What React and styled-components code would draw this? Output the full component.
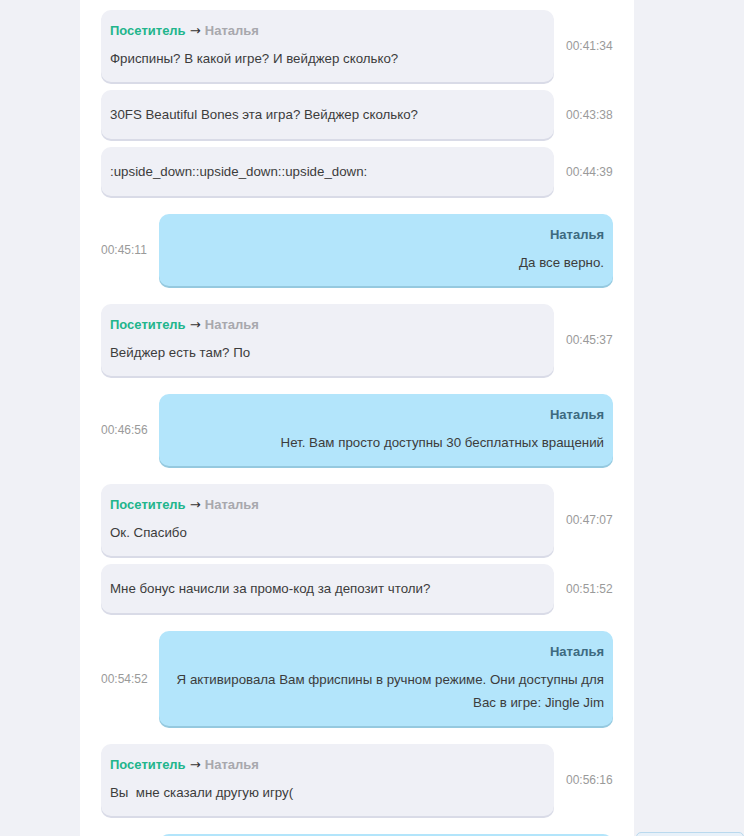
import styled, { createGlobalStyle } from "styled-components"

const GlobalStyle = createGlobalStyle`
	html, body {
		margin: 0;
		padding: 0;
		background: #f0f1f6;
		font-family: "Liberation Sans", Arial, sans-serif;
		overflow: hidden;
	}
`

const messages = [
	{ from: "visitor", header: true, time: "00:41:34", text: ["Фриспины? В какой игре? И вейджер сколько?"] },
	{ from: "visitor", time: "00:43:38", text: ["30FS Beautiful Bones эта игра? Вейджер сколько?"] },
	{ from: "visitor", time: "00:44:39", text: [":upside_down::upside_down::upside_down:"] },
	{ from: "agent", header: true, time: "00:45:11", text: ["Да все верно."] },
	{ from: "visitor", header: true, time: "00:45:37", text: ["Вейджер есть там? По"] },
	{ from: "agent", header: true, time: "00:46:56", text: ["Нет. Вам просто доступны 30 бесплатных вращений"] },
	{ from: "visitor", header: true, time: "00:47:07", text: ["Ок. Спасибо"] },
	{ from: "visitor", time: "00:51:52", text: ["Мне бонус начисли за промо-код за депозит чтоли?"] },
	{
		from: "agent",
		header: true,
		time: "00:54:52",
		text: ["Я активировала Вам фриспины в ручном режиме. Они доступны для", "Вас в игре: Jingle Jim"],
	},
	{ from: "visitor", header: true, time: "00:56:16", text: ["Вы  мне сказали другую игру("] },
	{ from: "agent", header: true, time: "00:57:02", text: ["Хорошо, сейчас проверю."] },
]

export default function App() {
	return (
		<>
			<GlobalStyle />
			<Page>
				<LeftGutter />
				<ChatPanel>
					{messages.map((msg, i) => {
						const prev = messages[i - 1]
						const sameSender = prev && prev.from === msg.from
						const agent = msg.from === "agent"
						return (
							<Row key={i} $agent={agent} $tight={sameSender} $first={i === 0}>
								<Bubble $agent={agent} $plain={!msg.header}>
									{msg.header &&
										(agent ? (
											<AgentName>Наталья</AgentName>
										) : (
											<Header>
												<Visitor>Посетитель</Visitor>
												<Arrow> → </Arrow>
												<Target>Наталья</Target>
											</Header>
										))}
									<Body>
										{msg.text.map((line, j) => (
											<Line key={j}>{line}</Line>
										))}
									</Body>
								</Bubble>
								<Time>{msg.time}</Time>
							</Row>
						)
					})}
				</ChatPanel>
				<SideColumn>
					<SideCard />
				</SideColumn>
			</Page>
		</>
	)
}

const Page = styled.div`
	display: flex;
	width: 744px;
	height: 836px;
	overflow: hidden;
`

const LeftGutter = styled.div`
	width: 80px;
	flex-shrink: 0;
`

const ChatPanel = styled.section`
	width: 554px;
	flex-shrink: 0;
	background: #ffffff;
	padding-top: 10px;
	box-sizing: border-box;
`

const Row = styled.div`
	display: flex;
	flex-direction: ${(p) => (p.$agent ? "row-reverse" : "row")};
	align-items: center;
	gap: 12px;
	padding: ${(p) => (p.$agent ? "0 21px" : "0 22px 0 21px")};
	margin-top: ${(p) => (p.$first ? "0" : p.$tight ? "8px" : "18px")};
`

const Bubble = styled.div`
	flex: 1;
	min-width: 0;
	box-sizing: border-box;
	padding: 13px 9px ${(p) => (p.$plain ? "13px" : "12px")} 9px;
	border-radius: 10px;
	background: ${(p) => (p.$agent ? "#b3e5fb" : "#eff0f6")};
	box-shadow: 0 2px 0 ${(p) => (p.$agent ? "#95c9df" : "#d9dbe7")};
	text-align: ${(p) => (p.$agent ? "right" : "left")};
`

const Header = styled.div`
	height: 15px;
	font-size: 13px;
	line-height: 15px;
	font-weight: bold;
	margin-bottom: 9px;
	white-space: nowrap;
`

const Visitor = styled.span`
	color: #22b58c;
`

const Arrow = styled.span`
	font-family: "DejaVu Sans", sans-serif;
	font-size: 13px;
	line-height: 15px;
	color: #333;
	font-weight: normal;
`

const Target = styled.span`
	color: #a8a8ad;
`

const AgentName = styled.div`
	font-size: 13px;
	line-height: 15px;
	font-weight: bold;
	color: #3d6a80;
	margin-bottom: 9px;
`

const Body = styled.div`
	font-size: 13.3px;
	line-height: 23px;
	color: #3c3c3c;
`

const Line = styled.div`
	white-space: pre;
`

const Time = styled.div`
	width: 46px;
	flex-shrink: 0;
	font-size: 12px;
	color: #9a9a9a;
	white-space: nowrap;
`

const SideColumn = styled.aside`
	flex: 1;
	padding-top: 832px;
	padding-left: 2px;
	box-sizing: border-box;
`

const SideCard = styled.div`
	height: 40px;
	border: 1px solid #b9d9ee;
	border-radius: 5px;
	background: #e8f1f9;
`
